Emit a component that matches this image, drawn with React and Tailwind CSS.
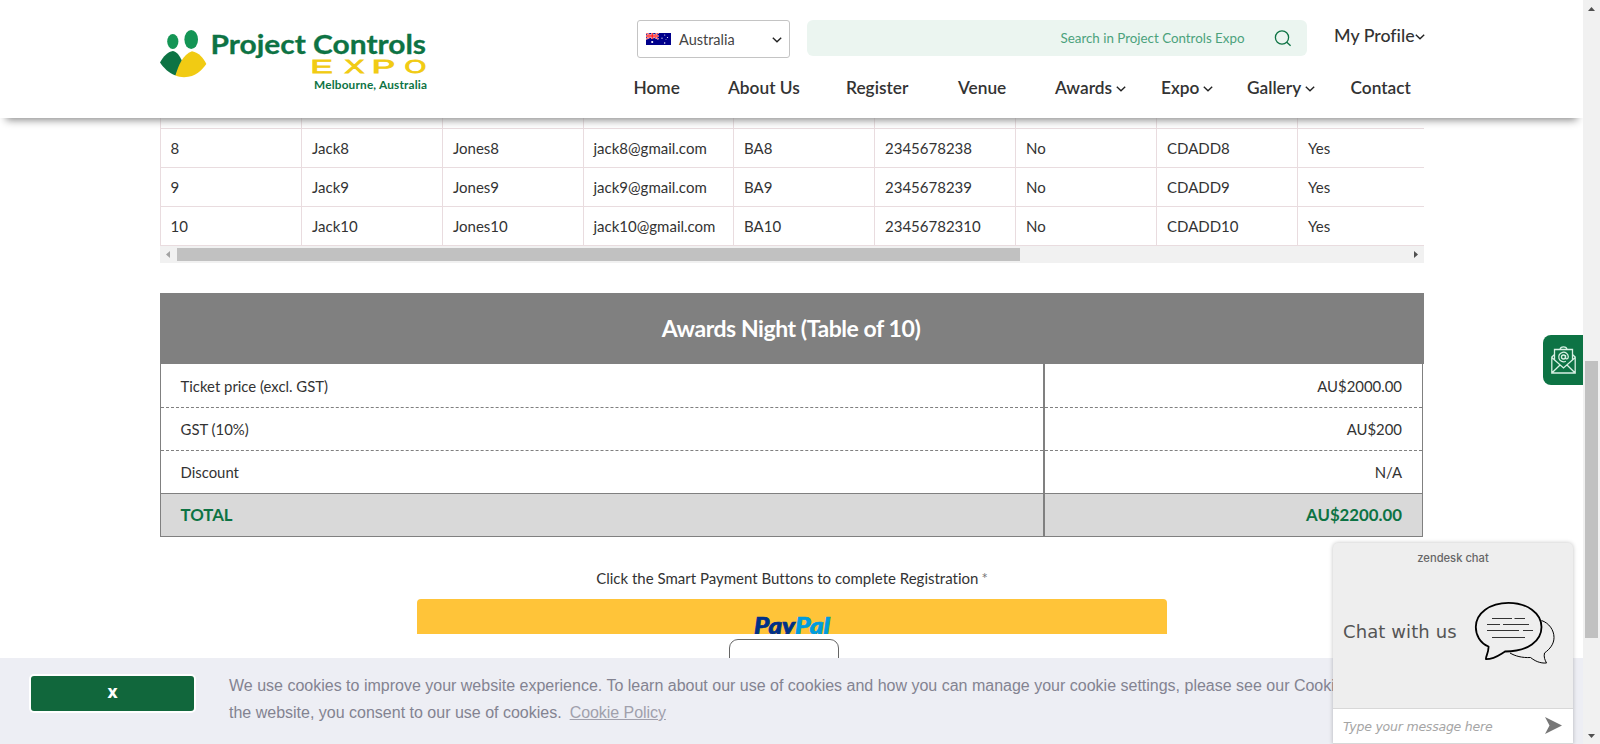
import React from "react";

const rows = [
  ["8", "Jack8", "Jones8", "jack8@gmail.com", "BA8", "2345678238", "No", "CDADD8", "Yes"],
  ["9", "Jack9", "Jones9", "jack9@gmail.com", "BA9", "2345678239", "No", "CDADD9", "Yes"],
  ["10", "Jack10", "Jones10", "jack10@gmail.com", "BA10", "23456782310", "No", "CDADD10", "Yes"],
];

const Chevron = () => (
  <svg width="10" height="6" viewBox="0 0 10 6" fill="none" className="shrink-0">
    <path d="M0.8 0.8 5 4.8 9.2 0.8" stroke="#222" strokeWidth="1.4" />
  </svg>
);

const Logo = () => (
  <svg width="270" height="70" viewBox="158 25 270 70" className="block">
    <ellipse cx="172.8" cy="41.500" rx="5.600" ry="7.600" fill="#149555" />
    <ellipse cx="191.200" cy="39.500" rx="6.800" ry="9.600" fill="#149555" />
    <path d="M160 62.500C163 57 167.500 51.500 173 51C177 52 180 56 182.200 61.500L175.500 75.500C169 73 163.500 68 160 62.500Z" fill="#0d7344" />
    <path d="M175.500 75.500C178 66 183 54 192 51.200C199 52.500 203.500 58 206.300 64C202 70 196 77 184 77.200C181 77 178 76.500 175.500 75.500Z" fill="#f1cb13" />
    <text x="210.500" y="53.800" textLength="215.500" lengthAdjust="spacingAndGlyphs" fontFamily="Lato, sans-serif" fontWeight="700" fontSize="27" fill="#0d7344" stroke="#0d7344" strokeWidth="0.3">Project Controls</text>
    <g fontFamily="Liberation Sans, sans-serif" fontSize="18" fill="#f1cb13" stroke="#f1cb13" strokeWidth="0.8">
      <text transform="translate(310.500 72.700) scale(1.850 1)">E</text>
      <text transform="translate(344.500 72.700) scale(1.650 1)">X</text>
      <text transform="translate(371.800 72.700) scale(1.950 1)">P</text>
      <text transform="translate(404.500 72.700) scale(1.550 1)">O</text>
    </g>
    <text x="314" y="89" textLength="113" fontFamily="Lato, sans-serif" fontWeight="700" fontSize="11.800" fill="#0d7344">Melbourne, Australia</text>
  </svg>
);

const Flag = () => (
  <svg width="25" height="12" viewBox="0 0 25 12">
    <rect width="25" height="12" fill="#00008b" />
    <path d="M0 0 12.500 6M12.500 0 0 6" stroke="#fff" strokeWidth="1.600" />
    <path d="M0 0 12.500 6M12.500 0 0 6" stroke="#f33" strokeWidth="0.900" />
    <path d="M6.250 0V6M0 3H12.500" stroke="#fff" strokeWidth="2" />
    <path d="M6.250 0V6M0 3H12.500" stroke="#f22" strokeWidth="1.300" />
    <g fill="#fff"><circle cx="6.200" cy="9" r="1.100" /><circle cx="18.700" cy="2" r=".6" /><circle cx="16" cy="5.200" r=".6" /><circle cx="21.500" cy="4.500" r=".6" /><circle cx="18.700" cy="10" r=".7" /><circle cx="20" cy="6.500" r=".4" /></g>
  </svg>
);

const nav = [
  ["Home", "w-[94.500px]"], ["About Us", "w-[118px]"], ["Register", "w-[112px]"], ["Venue", "w-[97px]"],
  ["Awards", "w-[106px]", true], ["Expo", "w-[86px]", true], ["Gallery", "w-[103.500px]", true], ["Contact", "w-[66px]"],
];

const Header = () => (
  <header className="relative z-10 flex h-[118px] w-full shrink-0 bg-white pl-[158px] shadow-[0_8px_8px_-6px_#888]">
    <div className="w-[475px] pt-[25px]"><Logo /></div>
    <div className="flex flex-1 flex-col">
      <div className="flex pt-5 pl-1">
        <div className="flex h-[38px] w-[153px] items-center rounded-[3px] border border-[#c4c4c4] pr-[7px] pl-2">
          <Flag />
          <span className="flex-1 pt-px pl-2 text-[14.500px] text-[#444]">Australia</span>
          <span className="pt-0.5"><Chevron /></span>
        </div>
        <div className="ml-[17px] flex h-9 w-[500px] items-center justify-end rounded-md bg-[#ebf5f0] pr-[15.500px] text-[13.350px] text-[#4ba27c]">
          <span>Search in Project Controls Expo</span>
          <svg width="18" height="18" viewBox="0 0 18 18" fill="none" stroke="#0d7344" strokeWidth="1.300" className="ml-[29px]">
            <circle cx="8" cy="8.500" r="6.600" /><path d="m12.800 13.200 3.800 3.600" />
          </svg>
        </div>
        <div className="ml-[27px] flex h-[30px] items-center text-[17.800px] font-medium text-[#333]">
          <span>My Profile</span><span className="pt-1"><Chevron /></span>
        </div>
      </div>
      <nav className="flex pt-[16px] pl-[0.500px] text-[17.300px] leading-7 font-semibold text-[#333]">
        {nav.map(([label, w, arrow]) => (
          <div key={label} className={"flex shrink-0 items-center gap-[3.500px] whitespace-nowrap " + w}>
            <span>{label}</span>{arrow && <span className="pt-0.5"><Chevron /></span>}
          </div>
        ))}
      </nav>
    </div>
  </header>
);

const widths = ["w-[141px]", "w-[141px]", "w-[141px]", "w-[150px]", "w-[141px]", "w-[141px]", "w-[141px]", "w-[141px]", "w-[127px]"];

const Attendees = () => (
  <div className="w-[1264px] shrink-0">
    <div className="flex h-[11px] border-b border-[#e9dcdf]">
      {widths.map((w, i) => <div key={i} className={"shrink-0 border-l border-[#e9dcdf] " + w} />)}
    </div>
    {rows.map((r) => (
      <div key={r[0]} className="flex h-[39px] border-b border-[#e9dcdf]">
        {r.map((c, i) => (
          <div key={i} className={"flex shrink-0 items-center border-l border-[#e9dcdf] text-[15px] text-[#333] " + (i === 0 || i === 3 ? "pl-[9.500px] " : "pl-2.5 ") + widths[i]}>
            {c}
          </div>
        ))}
      </div>
    ))}
    <div className="flex h-[17px] items-center bg-[#f1f1f1]">
      <svg width="17" height="17"><path d="M10 5v7L6 8.500z" fill="#a3a3a3" /></svg>
      <div className="h-[13px] w-[843px] bg-[#c1c1c1]" />
      <div className="flex-1" />
      <svg width="17" height="17"><path d="M7 5v7l4-3.500z" fill="#505050" /></svg>
    </div>
  </div>
);

const prices = [
  ["Ticket price (excl. GST)", "AU$2000.00", "h-[44px] border-b border-dashed pt-0.5 text-[#333]"],
  ["GST (10%)", "AU$200", "h-[43px] border-b border-dashed text-[#333]"],
  ["Discount", "N/A", "h-[43px] border-b border-solid text-[#333]"],
  ["TOTAL", "AU$2200.00", "h-[43px] border-b border-solid bg-[#d9d9d9] text-[16.800px] font-bold text-[#0d7344]"],
];

const Prices = () => (
  <section className="mt-[30px] w-[1264px] shrink-0">
    <h2 className="flex h-[71px] items-center justify-center bg-[#808080] pr-0.5 text-[23px] font-bold tracking-[-0.440px] text-white">Awards Night (Table of 10)</h2>
    <div className="w-[1263px] border-x border-[#808080] text-[14.900px]">
      {prices.map(([a, b, c]) => (
        <div key={a} className="flex">
          <div className={"flex w-[882px] items-center border-[#808080] pl-[19.500px] " + c}>{a}</div>
          <div className="w-[2px] bg-[#808080]" />
          <div className={"flex flex-1 items-center justify-end border-[#808080] pr-5 " + c}>{b}</div>
        </div>
      ))}
    </div>
  </section>
);

const CookieBar = () => (
  <div className="flex h-[86px] shrink-0 items-start bg-[#edeef4] pt-4 pl-[29px]">
    <button className="flex h-[39px] w-[167px] shrink-0 items-center justify-center rounded-[5px] border-2 border-white bg-[#11673c] pb-px font-['Open_Sans',sans-serif] text-[14px] leading-[34px] font-extrabold text-white">X</button>
    <p className="-mt-0.5 pl-[33px] font-['Liberation_Sans',sans-serif] text-[16px] leading-[27px] whitespace-nowrap text-[#838391]">
      We use cookies to improve your website experience. To learn about our use of cookies and how you can manage your cookie settings, please see our Cookie Policy. By using<br />
      the website, you consent to our use of cookies.<span className="ml-2 tracking-[-0.050px] text-[#a0a0ac] underline">Cookie Policy</span>
    </p>
  </div>
);

const Chat = () => (
  <aside className="absolute top-[543px] left-[1333px] z-20 flex h-[201px] w-[240px] flex-col overflow-hidden rounded-t-[5px] bg-[#eee] font-['DejaVu_Sans',sans-serif] shadow-[0_0_4px_rgba(0,0,0,0.25)]">
    <div className="pt-[5px] text-center font-['Inter',sans-serif] text-[11.200px] leading-5 font-medium text-[#666]">zendesk chat</div>
    <div className="flex flex-1 items-start pt-[32px] pl-[10px]">
      <div className="w-[131px] pt-[19px] text-[18px] leading-[26px] tracking-[0.100px] whitespace-nowrap text-[#555]">Chat with us</div>
      <svg width="82" height="66" viewBox="0 0 82 66" fill="none" stroke="#000" className="mt-px">
        <path d="M67.500 19.500C75 22 80 29 80 36.500C80 43 76 48 70.500 52C69.500 56 71 59 72.500 62C66 62.500 61 60 56.500 56.500C48 57 41 55 36 52" strokeWidth="1" />
        <path d="M34.500 1.800C53 1.800 67.500 12 67.500 26C67.500 40 54 50.500 31 50.500C25 54 21 58 12 58.200C11 57 15 51 14.500 45.500C6 42 1.800 34 1.800 26C1.800 12 16 1.800 34.500 1.800Z" fill="#eee" strokeWidth="1.800" />
        <path d="M18 17.500H38M40.500 17.500H51M13 23.500H26M29 23.500H55M13 29.500H45M49 29.500H59M18 36.500H51" stroke="#333" strokeWidth="1.100" />
      </svg>
    </div>
    <div className="flex h-[36px] shrink-0 items-center justify-between border-t border-b border-[#d8d8d8] bg-white pr-[11px] pl-[10px] text-[#a5a5a5] italic">
      <span className="pt-0.5 text-[12.500px] tracking-[-0.220px]">Type your message here</span>
      <svg width="17" height="17" viewBox="0 0 17 17" className="-mt-0.5"><path d="M0 0 17 8.500 0 17 4.500 8.500Z" fill="#777" /></svg>
    </div>
  </aside>
);

const MailTab = () => (
  <button className="absolute top-[335px] left-[1543px] z-10 flex h-[50px] w-10 items-center rounded-l-[8px] bg-[#0d7344] pl-2">
    <svg width="25" height="29" viewBox="0 0 25 29" fill="none" stroke="#d8f0e3" strokeWidth="1.300" className="-mt-px">
      <path d="M3.500 14.500V4.500H21.500V14.500M9 4.500C9.500 1 15.500 1 16 4.500M3.500 9.500.8 12V28H24.200V12L21.500 9.500M.8 12.500 12.500 23 24.200 12.500M.8 28 9 20M24.200 28 16 20" />
      <circle cx="12.500" cy="12" r="2" /><path d="M14.500 10v3c.3 1.500 2.800 1.300 2.800-1.200A4.800 4.800 0 1 0 14.800 16.200" />
    </svg>
  </button>
);

export default function App() {
  return (
    <div className="relative flex h-[744px] w-[1600px] overflow-hidden bg-white font-['Lato',sans-serif] [font-variant-ligatures:no-common-ligatures]">
      <div className="flex w-[1583px] flex-col overflow-hidden">
        <Header />
        <main className="flex h-[540px] shrink-0 flex-col overflow-hidden pl-40">
          <Attendees />
          <Prices />
          <p className="mt-[30px] w-[1264px] text-center text-[15px] leading-[22px] text-[#333]">Click the Smart Payment Buttons to complete Registration<span className="ml-[3px] text-[#777]">*</span></p>
          <div className="mt-[10px] ml-[257px] h-[35px] w-[750px] shrink-0 overflow-hidden rounded-t-[4px] bg-[#ffc439]">
            <svg width="750" height="35" className="block">
              <g fontFamily="Lato, sans-serif" fontWeight="900" fontStyle="italic" fontSize="23" strokeWidth="0.7">
                <text x="337" y="34.500" textLength="41" lengthAdjust="spacingAndGlyphs" fill="#003087" stroke="#003087">Pay</text>
                <text x="378" y="34.500" textLength="35" lengthAdjust="spacingAndGlyphs" fill="#009cde" stroke="#009cde">Pal</text>
              </g>
            </svg>
          </div>
          <div className="mt-[5px] ml-[569px] h-10 w-[110px] shrink-0 rounded-[9px] border border-[#666]" />
        </main>
        <CookieBar />
      </div>
      <div className="flex w-[17px] flex-col items-center bg-[#f1f1f1]">
        <svg width="17" height="17" className="shrink-0"><path d="M5 11h7L8.500 7z" fill="#505050" /></svg>
        <div className="mt-[344px] h-[277px] w-[13px] shrink-0 bg-[#c1c1c1]" />
        <div className="flex-1" />
        <svg width="17" height="17" className="shrink-0"><path d="M5 7h7L8.500 11z" fill="#505050" /></svg>
      </div>
      <MailTab />
      <Chat />
    </div>
  );
}
